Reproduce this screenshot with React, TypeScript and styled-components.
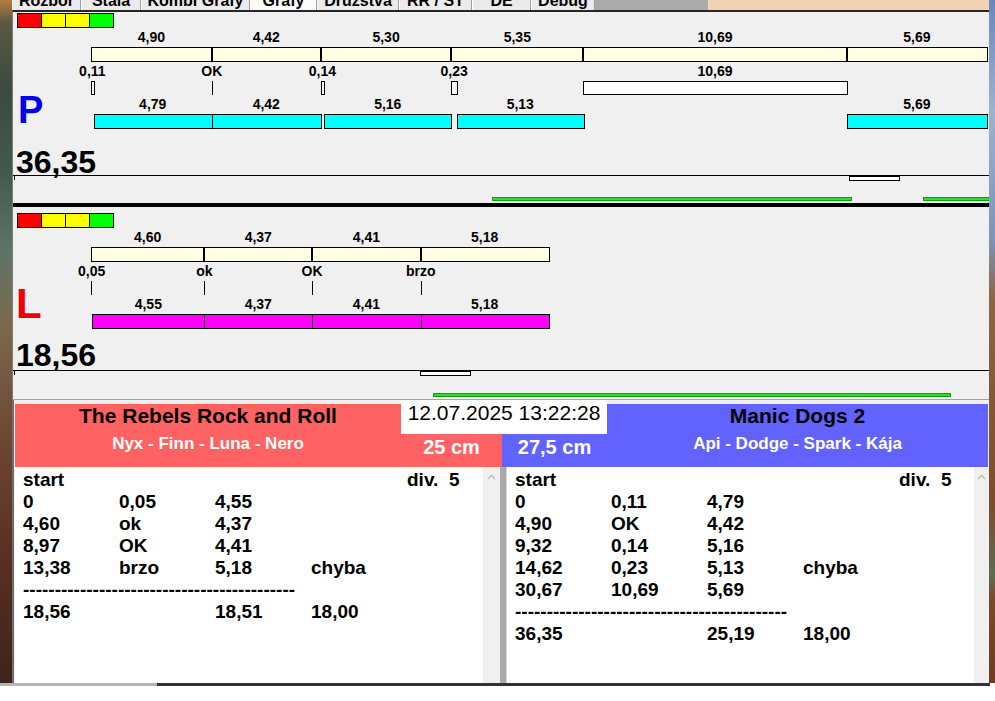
import React from "react";
import styled, { createGlobalStyle } from "styled-components";

const GlobalStyle = createGlobalStyle`
  html, body {
    margin: 0;
    padding: 0;
    background: #fff;
  }
  body {
    width: 995px;
    height: 701px;
    overflow: hidden;
    font-family: "Liberation Sans", Arial, sans-serif;
  }
`;

// chart scale: seconds -> px inside a lane (lane x 0 = page x 13)
const PX_PER_S = 24.65;
const ORIGIN = 78;
const tx = (t: number) => ORIGIN + t * PX_PER_S;
const snap = (t: number) => Math.round(tx(t)) + 0.5;
const fmt = (v: number) => v.toFixed(2).replace(".", ",");

interface IMark {
  t: number;
  w: number;
  label: string;
}

interface IRun {
  t: number;
  w: number;
}

interface ITrack {
  box: number;
  green: [number, number][];
  greenY: number;
  height: number;
}

interface ILane {
  letter: string;
  letterColor: string;
  letterSize: number;
  letterX: number;
  letterBaseline: number;
  score: string;
  runColor: string;
  splits: number[];
  marks: IMark[];
  runs: IRun[];
  track: ITrack;
  pad: number;
  scoreGap: number;
  trackGap: number;
}

const LEGEND = ["#ff0000", "#ffff00", "#ffff00", "#00ff00"];

const LANES: ILane[] = [
  {
    letter: "P",
    letterColor: "#0000f0",
    letterSize: 38,
    letterX: 5,
    letterBaseline: 110,
    score: "36,35",
    runColor: "#00ffff",
    splits: [4.9, 4.42, 5.3, 5.35, 10.69, 5.69],
    marks: [
      { t: 0, w: 0.11, label: "0,11" },
      { t: 4.9, w: 0, label: "OK" },
      { t: 9.32, w: 0.14, label: "0,14" },
      { t: 14.62, w: 0.23, label: "0,23" },
      { t: 19.97, w: 10.69, label: "10,69" },
    ],
    runs: [
      { t: 0.11, w: 4.79 },
      { t: 4.9, w: 4.42 },
      { t: 9.46, w: 5.16 },
      { t: 14.85, w: 5.13 },
      { t: 30.66, w: 5.69 },
    ],
    track: { box: 836, green: [[479, 838], [910, 976]], greenY: 22, height: 28 },
    pad: 0,
    scoreGap: 20,
    trackGap: 0,
  },
  {
    letter: "L",
    letterColor: "#f00000",
    letterSize: 42,
    letterX: 3,
    letterBaseline: 105,
    score: "18,56",
    runColor: "#ff00ff",
    splits: [4.6, 4.37, 4.41, 5.18],
    marks: [
      { t: 0, w: 0.05, label: "0,05" },
      { t: 4.6, w: 0, label: "ok" },
      { t: 8.97, w: 0, label: "OK" },
      { t: 13.38, w: 0, label: "brzo" },
    ],
    runs: [
      { t: 0.05, w: 4.55 },
      { t: 4.6, w: 4.37 },
      { t: 8.97, w: 4.41 },
      { t: 13.38, w: 5.18 },
    ],
    track: { box: 407, green: [[420, 937]], greenY: 23, height: 29 },
    pad: 5,
    scoreGap: 13,
    trackGap: 2,
  },
];

const TABS = [
  { label: "Rozbor", width: 69 },
  { label: "Stala", width: 60 },
  { label: "Kombi Grafy", width: 109 },
  { label: "Grafy", width: 67, active: true },
  { label: "Družstva", width: 82 },
  { label: "RR / ST", width: 73 },
  { label: "DE", width: 59 },
  { label: "Debug", width: 64 },
];

const DASHES = "-".repeat(43);

const TEAMS = [
  {
    name: "The Rebels Rock and Roll",
    dogs: "Nyx - Finn - Luna - Nero",
    color: "#ff6262",
    height: "25 cm",
    rows: [
      ["start", "", "", "", "div.  5"],
      ["0", "0,05", "4,55"],
      ["4,60", "ok", "4,37"],
      ["8,97", "OK", "4,41"],
      ["13,38", "brzo", "5,18", "chyba"],
      null,
      ["18,56", "", "18,51", "18,00"],
    ],
  },
  {
    name: "Manic Dogs 2",
    dogs: "Api - Dodge - Spark - Kája",
    color: "#6262ff",
    height: "27,5 cm",
    rows: [
      ["start", "", "", "", "div.  5"],
      ["0", "0,11", "4,79"],
      ["4,90", "OK", "4,42"],
      ["9,32", "0,14", "5,16"],
      ["14,62", "0,23", "5,13", "chyba"],
      ["30,67", "10,69", "5,69"],
      null,
      ["36,35", "", "25,19", "18,00"],
    ],
  },
];

/* ---------- chart ---------- */

const Chart = ({ lane }: { lane: ILane }) => {
  let acc = 0;
  const cells = lane.splits.map((w) => {
    const c = { t: acc, w };
    acc += w;
    return c;
  });
  const start = snap(0);
  const end = snap(acc);

  return (
    <ChartSvg width={976} height={116}>
      {cells.map((c) => (
        <ValueText key={`v${c.t}`} x={tx(c.t + c.w / 2)} y={29}>
          {fmt(c.w)}
        </ValueText>
      ))}
      <rect x={start} y={34.5} width={end - start} height={14} fill="#fffde2" stroke="#000" />
      {cells.slice(1).map((c) => (
        <line
          key={`d${c.t}`}
          x1={Math.round(tx(c.t))}
          x2={Math.round(tx(c.t))}
          y1={35}
          y2={48}
          stroke="#000"
          strokeWidth={2}
        />
      ))}

      {lane.marks.map((m) => {
        const width = m.w * PX_PER_S;
        return (
          <g key={`m${m.t}`}>
            <ValueText x={tx(m.t + m.w / 2)} y={63}>
              {m.label}
            </ValueText>
            {width < 1.5 ? (
              <line x1={snap(m.t)} x2={snap(m.t)} y1={68} y2={82} stroke="#000" />
            ) : (
              <rect
                x={snap(m.t)}
                y={68.5}
                width={Math.max(2, Math.round(width))}
                height={13}
                fill="#fff"
                stroke="#000"
              />
            )}
          </g>
        );
      })}

      {lane.runs.map((r) => (
        <g key={`r${r.t}`}>
          <ValueText x={tx(r.t + r.w / 2)} y={96}>
            {fmt(r.w)}
          </ValueText>
          <rect
            x={snap(r.t)}
            y={101.5}
            width={snap(r.t + r.w) - snap(r.t)}
            height={14}
            fill={lane.runColor}
            stroke="#000"
          />
        </g>
      ))}

      <LetterText
        x={lane.letterX}
        y={lane.letterBaseline}
        $size={lane.letterSize}
        $color={lane.letterColor}
      >
        {lane.letter}
      </LetterText>
    </ChartSvg>
  );
};

const Track = ({ track }: { track: ITrack }) => (
  <TrackSvg width={976} height={track.height}>
    <line x1={0} x2={976} y1={0.5} y2={0.5} stroke="#000" />
    <line x1={1.5} x2={1.5} y1={0} y2={5} stroke="#000" />
    <rect x={track.box + 0.5} y={1.5} width={50} height={4} fill="#fff" stroke="#000" />
    {track.green.map(([a, b]) => (
      <rect
        key={a}
        x={a + 0.5}
        y={track.greenY + 0.5}
        width={b - a}
        height={3}
        fill="#22e622"
        stroke="#169a16"
      />
    ))}
  </TrackSvg>
);

const Lane = ({ lane }: { lane: ILane }) => (
  <LaneBox $pad={lane.pad}>
    <ChartArea>
      <Chart lane={lane} />
      <Legend>
        {LEGEND.map((c, i) => (
          <LegendCell key={i} $color={c} />
        ))}
      </Legend>
    </ChartArea>
    <Score $gap={lane.scoreGap}>{lane.score}</Score>
    <TrackWrap $gap={lane.trackGap}>
      <Track track={lane.track} />
    </TrackWrap>
  </LaneBox>
);

/* ---------- lists ---------- */

const RunList = ({ rows }: { rows: (string[] | null)[] }) => (
  <ListBody>
    {rows.map((row, i) =>
      row === null ? (
        <DashCell key={i}>{DASHES}</DashCell>
      ) : (
        [0, 1, 2, 3, 4].map((c) => <ListCell key={`${i}-${c}`}>{row[c] || ""}</ListCell>)
      )
    )}
  </ListBody>
);

const ScrollUp = () => (
  <svg width="9" height="6" viewBox="0 0 9 6">
    <polyline points="1,5 4.5,1.5 8,5" fill="none" stroke="#b9b9b9" strokeWidth="1.4" />
  </svg>
);

export default function App() {
  const [home, guest] = TEAMS;
  return (
    <>
      <GlobalStyle />
      <Screen>
        <DesktopLeft />
        <Window>
          <TabBar>
            {TABS.map((t) => (
              <Tab key={t.label} $width={t.width} $active={!!t.active}>
                <TabLabel>{t.label}</TabLabel>
              </Tab>
            ))}
            <TabFiller />
            <TabAside />
          </TabBar>

          <ChartPanel>
            <Lane lane={LANES[0]} />
            <LaneDivider />
            <Lane lane={LANES[1]} />
          </ChartPanel>

          <BottomArea>
            <ScoreBoard>
              <TeamHead $color={home.color}>
                <TeamName>{home.name}</TeamName>
                <TeamDogs>{home.dogs}</TeamDogs>
              </TeamHead>
              <MiddleBlock>
                <DateBox>12.07.2025 13:22:28</DateBox>
                <HeightCell $color={home.color}>{home.height}</HeightCell>
                <HeightCell $color={guest.color}>{guest.height}</HeightCell>
              </MiddleBlock>
              <TeamHead $color={guest.color}>
                <TeamName>{guest.name}</TeamName>
                <TeamDogs>{guest.dogs}</TeamDogs>
              </TeamHead>
            </ScoreBoard>

            <Lists>
              <ListPanel>
                <RunList rows={home.rows} />
                <ScrollBar $width={17}>
                  <ScrollUp />
                </ScrollBar>
              </ListPanel>
              <ListSeparator />
              <ListPanel>
                <RunList rows={guest.rows} />
                <ScrollBar $width={14}>
                  <ScrollUp />
                </ScrollBar>
              </ListPanel>
            </Lists>
          </BottomArea>
        </Window>
        <DesktopRight />
      </Screen>
      <TaskEdge />
    </>
  );
}

/* ---------- styles ---------- */

const Screen = styled.div`
  display: flex;
  height: 683px;
`;

const DesktopLeft = styled.div`
  width: 12px;
  background: linear-gradient(
    #b97c3c 0,
    #5a5a40 22px,
    #3b4a42 90px,
    #44584e 170px,
    #5f7468 250px,
    #7b6a4e 320px,
    #6d4634 440px,
    #5a2e22 560px,
    #3d241c 683px
  );
`;

const DesktopRight = styled.div`
  width: 6px;
  background: linear-gradient(
    #6a88ba 0,
    #9fb2cf 110px,
    #7d94b6 240px,
    #8c6444 300px,
    #7c4c2a 500px,
    #5d6c52 575px,
    #7a4a28 600px,
    #6a3c20 683px
  );
`;

const TaskEdge = styled.div`
  height: 3px;
  background: linear-gradient(to right, #b4b4b4 0 157px, #333 157px 990px, #fff 990px);
`;

const Window = styled.div`
  width: 977px;
  display: flex;
  flex-direction: column;
  background: #f0f0f0;
`;

const TabBar = styled.div`
  display: flex;
  height: 12px;
  overflow: hidden;
  background: #f0f0f0;
`;

const Tab = styled.div<{ $width: number; $active: boolean }>`
  width: ${(p) => p.$width}px;
  box-sizing: border-box;
  border-left: 1px solid #fff;
  border-right: 1px solid #9c9c9c;
  background: ${(p) => (p.$active ? "#fbfbfb" : "#ebebeb")};
  overflow: hidden;
  text-align: center;
`;

const TabLabel = styled.span`
  display: block;
  margin-top: -7px;
  font: bold 16px/16px "Liberation Sans", Arial, sans-serif;
  color: #000;
  white-space: nowrap;
`;

const TabFiller = styled.div`
  width: 113px;
  background: #ababab;
`;

const TabAside = styled.div`
  flex: 1;
  border-left: 1px solid #e6dccf;
  background: #f2d2b3;
`;

const ChartPanel = styled.div`
  box-sizing: border-box;
  border-top: 2px solid #262626;
  border-left: 1px solid #7a7a7a;
  border-bottom: 1px solid #a2a2a2;
  background: #f0f0f0;
`;

const LaneBox = styled.section<{ $pad: number }>`
  padding-top: ${(p) => p.$pad}px;
`;

const ChartArea = styled.div`
  position: relative;
  height: 116px;
`;

const ChartSvg = styled.svg`
  position: absolute;
  left: 0;
  top: 0;
  font-family: "Liberation Sans", Arial, sans-serif;
`;

const ValueText = styled.text`
  font-size: 14px;
  font-weight: bold;
  fill: #000;
  text-anchor: middle;
`;

const LetterText = styled.text<{ $size: number; $color: string }>`
  font-size: ${(p) => p.$size}px;
  font-weight: bold;
  fill: ${(p) => p.$color};
`;

const Legend = styled.div`
  position: relative;
  display: flex;
  margin: 1px 0 0 4px;
  width: max-content;
`;

const LegendCell = styled.div<{ $color: string }>`
  width: 25px;
  height: 15px;
  box-sizing: border-box;
  border: 1px solid #000;
  background: ${(p) => p.$color};
  & + & {
    margin-left: -1px;
  }
`;

const Score = styled.div<{ $gap: number }>`
  margin-top: ${(p) => p.$gap}px;
  height: 26px;
  padding-left: 3px;
  font: bold 32px/26px "Liberation Sans", Arial, sans-serif;
  color: #000;
`;

const TrackWrap = styled.div<{ $gap: number }>`
  margin-top: ${(p) => p.$gap}px;
`;

const TrackSvg = styled.svg`
  display: block;
`;

const LaneDivider = styled.div`
  height: 4px;
  background: #000;
`;

const BottomArea = styled.div`
  flex: 1;
  box-sizing: border-box;
  border-left: 2px solid #6e6e6e;
  padding-left: 1px;
  background: #f0f0f0;
`;

const ScoreBoard = styled.div`
  display: grid;
  grid-template-columns: 386px 206px 381px;
  height: 67px;
`;

const TeamHead = styled.div<{ $color: string }>`
  margin-top: 4px;
  display: flex;
  flex-direction: column;
  align-items: center;
  background: ${(p) => p.$color};
`;

const TeamName = styled.div`
  font: bold 21px/24px "Liberation Sans", Arial, sans-serif;
  color: #000;
  white-space: nowrap;
`;

const TeamDogs = styled.div`
  margin-top: 6px;
  font: bold 17px/20px "Liberation Sans", Arial, sans-serif;
  color: #fff;
  white-space: nowrap;
`;

const MiddleBlock = styled.div`
  display: grid;
  grid-template-columns: 101px 105px;
  grid-template-rows: 34px 1fr;
`;

const DateBox = styled.div`
  grid-column: 1 / -1;
  background: #fff;
  text-align: center;
  font: 21px/26px "Liberation Sans", Arial, sans-serif;
  color: #000;
  white-space: nowrap;
`;

const HeightCell = styled.div<{ $color: string }>`
  padding-top: 2px;
  background: ${(p) => p.$color};
  text-align: center;
  font: bold 20px/22px "Liberation Sans", Arial, sans-serif;
  color: #fff;
  white-space: nowrap;
`;

const Lists = styled.div`
  display: grid;
  grid-template-columns: 485px 7px 481px;
  height: 216px;
`;

const ListPanel = styled.div`
  display: flex;
  min-width: 0;
`;

const ListSeparator = styled.div`
  background: #a9a9a9;
  border-right: 1px solid #d8d8d8;
`;

const ListBody = styled.div`
  flex: 1;
  display: grid;
  grid-template-columns: repeat(5, 96px);
  grid-auto-rows: 22px;
  align-content: start;
  padding: 2px 0 0 8px;
  background: #fff;
  font: bold 19px/22px "Liberation Sans", Arial, sans-serif;
  color: #000;
  overflow: hidden;
`;

const ListCell = styled.div`
  white-space: pre;
`;

const DashCell = styled.div`
  grid-column: 1 / -1;
  white-space: nowrap;
`;

const ScrollBar = styled.div<{ $width: number }>`
  width: ${(p) => p.$width}px;
  display: flex;
  justify-content: center;
  padding-top: 7px;
  box-sizing: border-box;
  background: #f0f0f0;
`;
